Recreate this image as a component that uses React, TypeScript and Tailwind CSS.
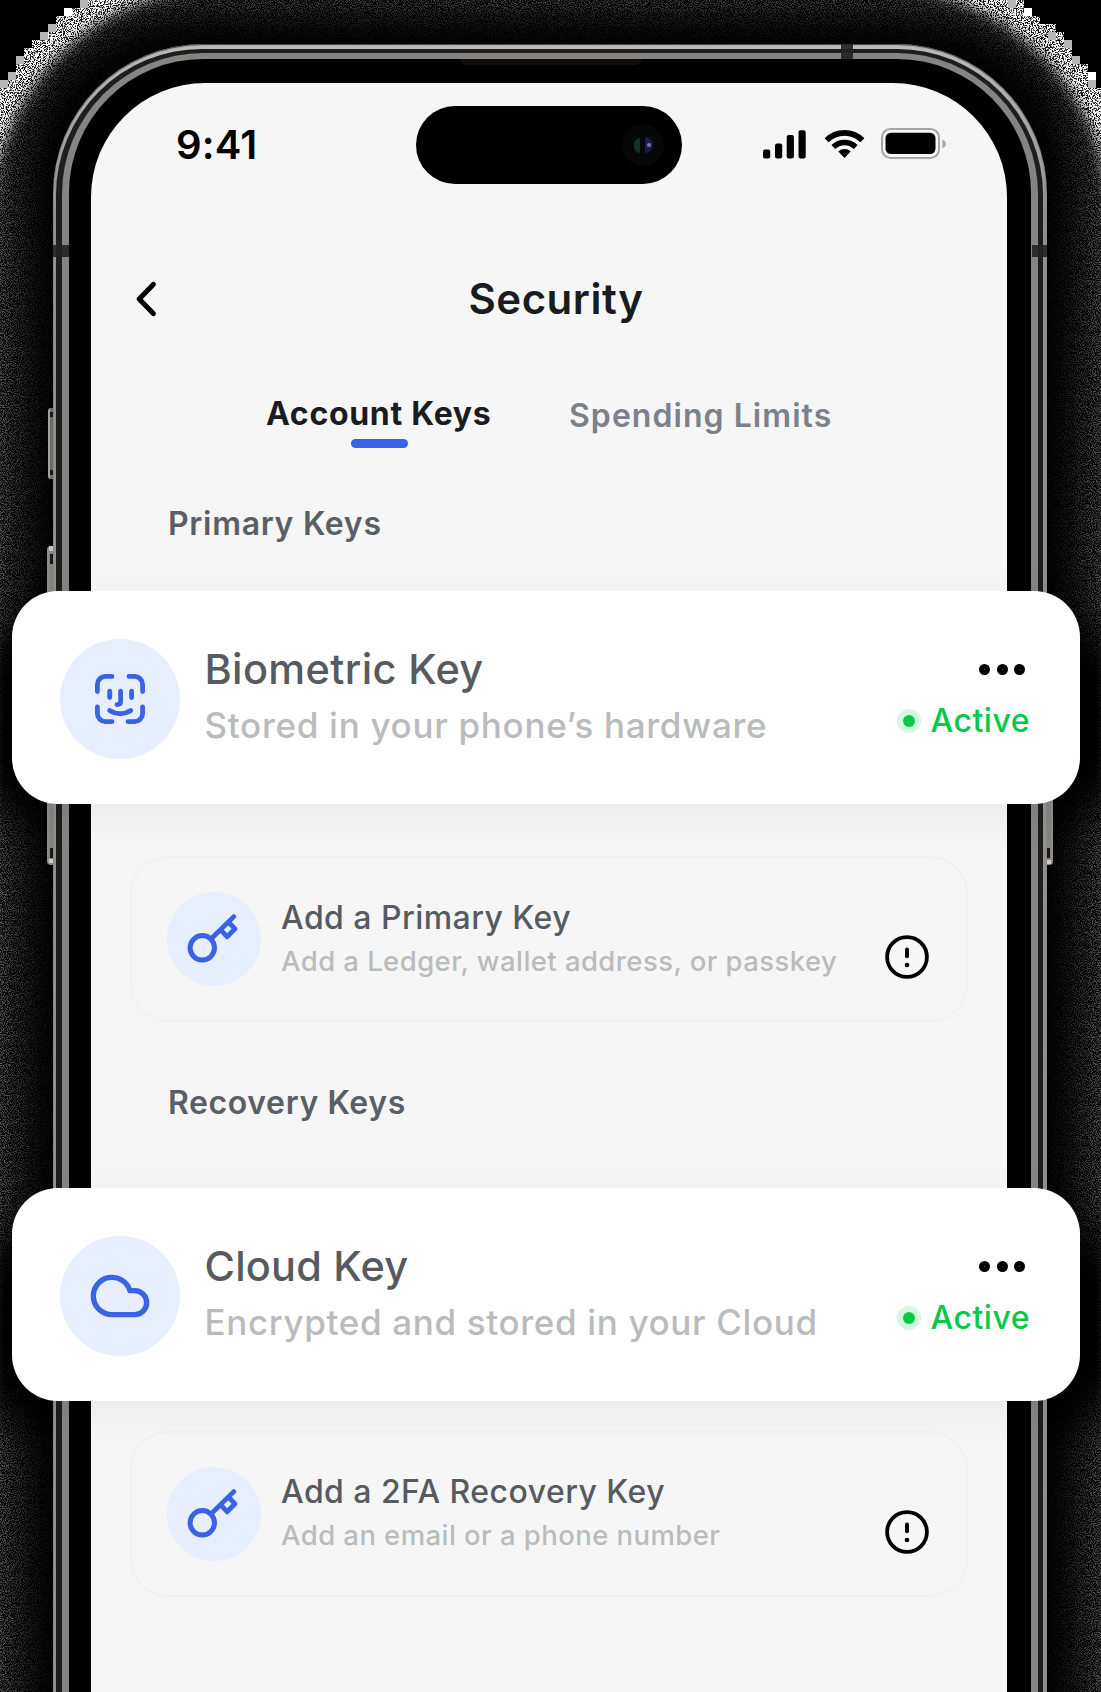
import type { ReactNode } from "react";
import { Cloud } from "lucide-react";

function GrainBackdrop() {
  return (
    <svg className="absolute inset-0" width="1101" height="1692" viewBox="0 0 1101 1692" aria-hidden="true">
      <defs>
        <filter id="grain" x="0" y="0" width="1101" height="1692" filterUnits="userSpaceOnUse" colorInterpolationFilters="sRGB">
          <feTurbulence type="fractalNoise" baseFrequency="0.93" numOctaves="2" seed="7" result="noise" />
          <feColorMatrix in="noise" type="matrix" values="4.4 0 0 0 -1.85  4.4 0 0 0 -1.85  4.4 0 0 0 -1.85  0 0 0 0 1" result="speck" />
          <feComposite in="SourceGraphic" in2="speck" operator="arithmetic" k1="1" k2="0" k3="0" k4="0" />
        </filter>
        <filter id="ring" x="0" y="0" width="1101" height="1692" filterUnits="userSpaceOnUse" colorInterpolationFilters="sRGB">
          <feTurbulence type="fractalNoise" baseFrequency="0.93" numOctaves="2" seed="3" result="noise" />
          <feColorMatrix in="noise" type="matrix" values="0 0 0 0 1  0 0 0 0 1  0 0 0 0 1  16 0 0 0 -7.2" result="speck" />
          <feComposite in="speck" in2="SourceGraphic" operator="in" />
        </filter>
        <filter id="soft" x="-300" y="-300" width="1700" height="2500" filterUnits="userSpaceOnUse">
          <feGaussianBlur stdDeviation="26" />
        </filter>
        <filter id="softRing" x="-300" y="-300" width="1700" height="2500" filterUnits="userSpaceOnUse">
          <feGaussianBlur stdDeviation="7" />
        </filter>
      </defs>
      <rect width="1101" height="1692" fill="#000" />
      <g filter="url(#grain)">
        <rect width="1101" height="1692" fill="#787878" />
        <g filter="url(#soft)">
          <rect x="14" y="4" width="1073" height="1900" rx="175" fill="#000" />
          <rect x="-40" y="620" width="1180" height="200" rx="60" fill="#000" />
          <rect x="-40" y="1225" width="1180" height="200" rx="60" fill="#000" />
        </g>
      </g>
      <g filter="url(#ring)">
        <rect x="-30" y="-34" width="1161" height="2000" rx="256" fill="none" stroke="#fff" strokeWidth="40" filter="url(#softRing)" />
      </g>
      <path d="M0 0H88V0H80V8H64V16H56V24H48V32H40V40H32V48H24V56H16V72H8V80H0Z" fill="#000" />
      <path d="M1101 0H1016V0H1024V8H1032V16H1040V24H1056V32H1064V40H1072V56H1080V64H1088V80H1096V88H1101Z" fill="#000" />
      <g fill="#b4b4b4">
        <path d="M80 0h8v8h-8zM48 24h8v8h-8zM40 32h8v8h-8zM16 56h8v8h-8zM8 72h8v8h-8zM0 80h8v8h-8z" />
        <path d="M1008 0h8v8h-8zM1048 32h8v8h-8zM1064 40h8v8h-8zM1072 56h8v8h-8zM1088 80h8v8h-8z" />
      </g>
      <g fill="#fff">
        <path d="M64 8h8v8h-8zM1024 8h8v8h-8zM1088 72h8v8h-8z" />
      </g>
    </svg>
  );
}

function SideButtons() {
  return (
    <>
      <div className="absolute top-[408px] left-[48px] h-[71px] w-[7px] rounded-l-[3px] border-l-2 border-[#a3a19f] bg-[#6d6b69]">
        <div className="absolute top-[4px] left-0 h-[5px] w-[4px] bg-[#191919]" />
        <div className="absolute bottom-[4px] left-0 h-[5px] w-[4px] bg-[#191919]" />
      </div>
      <div className="absolute top-[546px] left-[47px] h-[319px] w-[9px] rounded-l-[4px] border-l-2 border-[#8f8d8b] bg-[#858381]">
        <div className="absolute top-0 left-0 h-[5px] w-[6px] bg-[#c9c7c5]" />
        <div className="absolute top-[8px] left-[1px] h-[10px] w-[4px] bg-[#191919]" />
        <div className="absolute bottom-[7px] left-[1px] h-[10px] w-[4px] bg-[#191919]" />
        <div className="absolute bottom-[2px] left-0 h-[4px] w-[5px] bg-[#d0cecc]" />
      </div>
      <div className="absolute top-[700px] left-[1045px] h-[165px] w-[8px] rounded-r-[4px] border-r-2 border-[#8f8d8b] bg-[#858381]">
        <div className="absolute bottom-[7px] left-[1px] h-[10px] w-[4px] bg-[#191919]" />
        <div className="absolute bottom-[1px] left-[1px] h-[4px] w-[5px] bg-[#d0cecc]" />
      </div>
    </>
  );
}

function StatusBar() {
  return (
    <div className="flex h-[101px] pt-[23px]">
      <div className="flex w-[325px] items-center pl-[85px]">
        <span className="text-[40px] leading-[40px] font-semibold tracking-[0.2px] text-black">9:41</span>
      </div>
      <div className="flex w-[266px] items-center justify-end rounded-full bg-black pr-[18px]">
        <div className="flex size-[42px] items-center justify-center gap-[5px] rounded-full bg-[#060808]">
          <span className="h-[15px] w-[6px] rounded-l-full bg-[#16302a]" />
          <span className="flex h-[16px] w-[8px] items-center justify-center rounded-r-full bg-[#191d45]">
            <span className="size-[4px] rounded-full bg-[#7a78b4]" />
          </span>
        </div>
      </div>
      <div className="flex w-[325px] items-start pt-[22px] pl-[81px]">
        <svg width="44" height="31" viewBox="0 0 44 31" fill="#000">
          <rect x="0" y="21.5" width="7.2" height="9" rx="2" />
          <rect x="12" y="15.5" width="7.2" height="15" rx="2" />
          <rect x="23.7" y="7" width="7.2" height="23.5" rx="2" />
          <rect x="35.5" y="2.2" width="7.2" height="28.3" rx="2" />
        </svg>
        <svg className="ml-[17px]" width="41" height="31" viewBox="0 0 41 31">
          <path d="M2.6 12.2A25.5 25.5 0 0 1 38.4 12.2" fill="none" stroke="#000" strokeWidth="5.6" />
          <path d="M9.3 19A16 16 0 0 1 31.7 19" fill="none" stroke="#000" strokeWidth="5.4" />
          <path d="M14.3 23.6A9 9 0 0 1 26.7 23.6L20.5 30Z" fill="#000" />
        </svg>
        <svg className="ml-[16px]" width="66" height="31" viewBox="0 0 66 31">
          <rect x="1" y="1" width="57" height="29" rx="8.5" fill="none" stroke="#a5a5a5" strokeWidth="2" />
          <rect x="4.5" y="4.7" width="50" height="21.4" rx="5.5" fill="#000" />
          <path d="M61.3 11.6q3.6 1.2 3.6 4.3t-3.6 4.3z" fill="#a9a9a9" />
        </svg>
      </div>
    </div>
  );
}

function FaceIcon() {
  return (
    <svg width="50" height="50" viewBox="0 0 50 50" fill="none" stroke="#3a62e4" strokeWidth="4.8" strokeLinecap="round" strokeLinejoin="round">
      <path d="M2.4 17.6V10.4a8 8 0 0 1 8-8h6.6M34 2.4h5.6a8 8 0 0 1 8 8v7.2M47.6 33v6.6a8 8 0 0 1-8 8H33M17 47.6h-6.6a8 8 0 0 1-8-8V33" />
      <path d="M14.7 17.2v6.4M36.6 17.2v6.4M25.6 17.2v10.4q0 3-3.6 3" />
      <path d="M14.7 36.6q10.6 6.4 21 0" />
    </svg>
  );
}

function KeyIcon() {
  return (
    <svg width="50" height="50" viewBox="0 0 50 50" fill="none" stroke="#3a62e4" strokeWidth="4.8" strokeLinecap="round" strokeLinejoin="round" overflow="visible">
      <circle cx="13.3" cy="34.8" r="12.2" strokeWidth="5" />
      <path d="M22 26 44.8 3.6M39.4 9l6.6 6.8-7.9 7.9-6.2-6.6" />
    </svg>
  );
}

function MoreIcon() {
  return (
    <div className="flex gap-[6.5px]">
      {[0, 1, 2].map((i) => (
        <span key={i} className="flex size-[11px] items-center justify-center rounded-full bg-black">
          <span className="size-px bg-[#555]" />
        </span>
      ))}
    </div>
  );
}

function KeyCard({ icon, title, subtitle, titleClass, subtitleClass }: { icon: ReactNode; title: string; subtitle: string; titleClass: string; subtitleClass: string }) {
  return (
    <div className="relative mr-[-73px] ml-[-79px] flex h-[213px] rounded-[46px] bg-white pr-[50px] pl-[48px] shadow-[0_10px_40px_rgba(0,0,0,0.055)]">
      <div className="mt-[48px] flex size-[120px] shrink-0 items-center justify-center rounded-full bg-[#e7eefd]">{icon}</div>
      <div className="mt-[53px] ml-[24.5px] flex flex-col whitespace-nowrap">
        <span className={`text-[41.5px] leading-[50px] font-[480] text-[#575b60] ${titleClass}`}>{title}</span>
        <span className={`mt-[8px] text-[35px] leading-[46px] font-[450] text-[#b9bbbc] ${subtitleClass}`}>{subtitle}</span>
      </div>
      <div className="mt-[72.5px] ml-auto flex flex-col items-end">
        <div className="pr-[5px]">
          <MoreIcon />
        </div>
        <div className="mt-[26.5px] flex items-center">
          <span className="flex size-[24px] items-center justify-center rounded-full bg-[#d6f7e1]">
            <span className="size-[12px] rounded-full bg-[#06c947]" />
          </span>
          <span className="ml-[9.5px] text-[32px] leading-[40px] font-[480] tracking-[0.5px] text-[#06c947]">Active</span>
        </div>
      </div>
    </div>
  );
}

function AddCard({ title, subtitle, titleClass, subtitleClass }: { title: string; subtitle: string; titleClass: string; subtitleClass: string }) {
  return (
    <div className="mr-[39px] ml-[39px] flex h-[166px] rounded-[38px] border-2 border-[#f0f1f1] pl-[35px]">
      <div className="mt-[34px] flex size-[94px] shrink-0 items-center justify-center rounded-full bg-[#e7eefd] pb-[2px]">
        <KeyIcon />
      </div>
      <div className="mt-[39.5px] ml-[20px] flex w-[604px] flex-col whitespace-nowrap">
        <span className={`text-[32px] leading-[40px] font-medium text-[#575b60] ${titleClass}`}>{title}</span>
        <span className={`mt-[6px] text-[27.5px] leading-[34px] font-[480] text-[#babcbc] ${subtitleClass}`}>{subtitle}</span>
      </div>
      <svg className="mt-[77px]" width="44" height="44" viewBox="0 0 44 44" fill="none" stroke="#000" strokeLinecap="round">
        <circle cx="22" cy="22" r="19.9" strokeWidth="3.8" />
        <path d="M22 14.6v6.6" strokeWidth="4" />
        <circle cx="22" cy="30" r="2.3" fill="#000" stroke="none" />
      </svg>
    </div>
  );
}

function Screen() {
  return (
    <div className="flex h-[1640px] w-[916px] flex-col rounded-t-[114px] bg-[#f6f6f6]">
      <StatusBar />
      <div className="mt-[85px] flex h-[60px] items-center">
        <svg className="ml-[44px]" width="22" height="36" viewBox="0 0 22 36" fill="none" stroke="#000" strokeWidth="5" strokeLinecap="round" strokeLinejoin="round">
          <path d="M18.3 3.4 4.2 18l14.1 14.6" />
        </svg>
        <h1 className="ml-[311.5px] text-[42px] leading-[50px] font-semibold tracking-[0.5px] text-[#1b1c1e]">Security</h1>
      </div>
      <div className="mt-[65px] flex h-[55px] pl-[175px] whitespace-nowrap">
        <div className="w-[303px]">
          <div className="text-[32px] leading-[40px] font-[650] tracking-[0.7px] text-[#1b1c1e]">Account Keys</div>
          <div className="mt-[4.5px] ml-[85px] h-[9.5px] w-[57px] rounded-full bg-[#3a62e4]" />
        </div>
        <div className="pt-[2px] text-[32px] leading-[40px] font-[580] tracking-[1.05px] text-[#7c808a]">Spending Limits</div>
      </div>
      <h2 className="mt-[55px] ml-[77px] text-[32px] leading-[40px] font-semibold tracking-[0.7px] text-[#5b5f65]">Primary Keys</h2>
      <div className="mt-[47px]">
        <KeyCard icon={<FaceIcon />} title="Biometric Key" subtitle="Stored in your phone’s hardware" titleClass="tracking-[0.35px]" subtitleClass="tracking-[0.7px]" />
      </div>
      <div className="mt-[52px]">
        <AddCard title="Add a Primary Key" subtitle="Add a Ledger, wallet address, or passkey" titleClass="tracking-[0.45px]" subtitleClass="tracking-[0.43px]" />
      </div>
      <h2 className="mt-[61px] ml-[77px] text-[32px] leading-[40px] font-semibold tracking-[0.6px] text-[#5b5f65]">Recovery Keys</h2>
      <div className="mt-[65px]">
        <KeyCard icon={<Cloud size={64} color="#3a62e4" strokeWidth={2} />} title="Cloud Key" subtitle="Encrypted and stored in your Cloud" titleClass="tracking-[0.2px]" subtitleClass="tracking-[0.65px]" />
      </div>
      <div className="mt-[29.5px]">
        <AddCard title="Add a 2FA Recovery Key" subtitle="Add an email or a phone number" titleClass="tracking-[0.45px]" subtitleClass="tracking-[0.43px]" />
      </div>
    </div>
  );
}

export default function App() {
  return (
    <div className="relative h-[1692px] w-[1101px] overflow-hidden bg-black font-['Inter',sans-serif]">
      <GrainBackdrop />
      <SideButtons />
      <div className="relative pt-[44px] pl-[53px]">
        <div className="relative w-[994px] rounded-t-[150px] bg-linear-to-b from-[#bdbbb8] from-0% to-[#93918f] to-10% pt-[5px] pr-[4px] pl-[3px] shadow-[inset_0_1px_1px_#444]">
          <div className="rounded-t-[146px] bg-[#1e1e1d] pt-[4px] pr-[5px] pl-[6px]">
            <div className="rounded-t-[141px] bg-[#868482] pt-[6px] pr-[7px] pl-[7px]">
              <div className="rounded-t-[134px] bg-black pt-[24px] pl-[22px]">
                <Screen />
              </div>
            </div>
          </div>
          <div className="absolute top-0 left-[788px] h-[15px] w-[12px] bg-[#222]/90" />
          <div className="absolute top-[201px] left-0 h-[12px] w-[16px] bg-[#222]/90" />
          <div className="absolute top-[201px] right-0 h-[12px] w-[15px] bg-[#222]/90" />
          <div className="absolute top-[15px] left-[408px] h-[6px] w-[180px] rounded-b-[5px] bg-[#0e0e0e]" />
        </div>
      </div>
    </div>
  );
}
